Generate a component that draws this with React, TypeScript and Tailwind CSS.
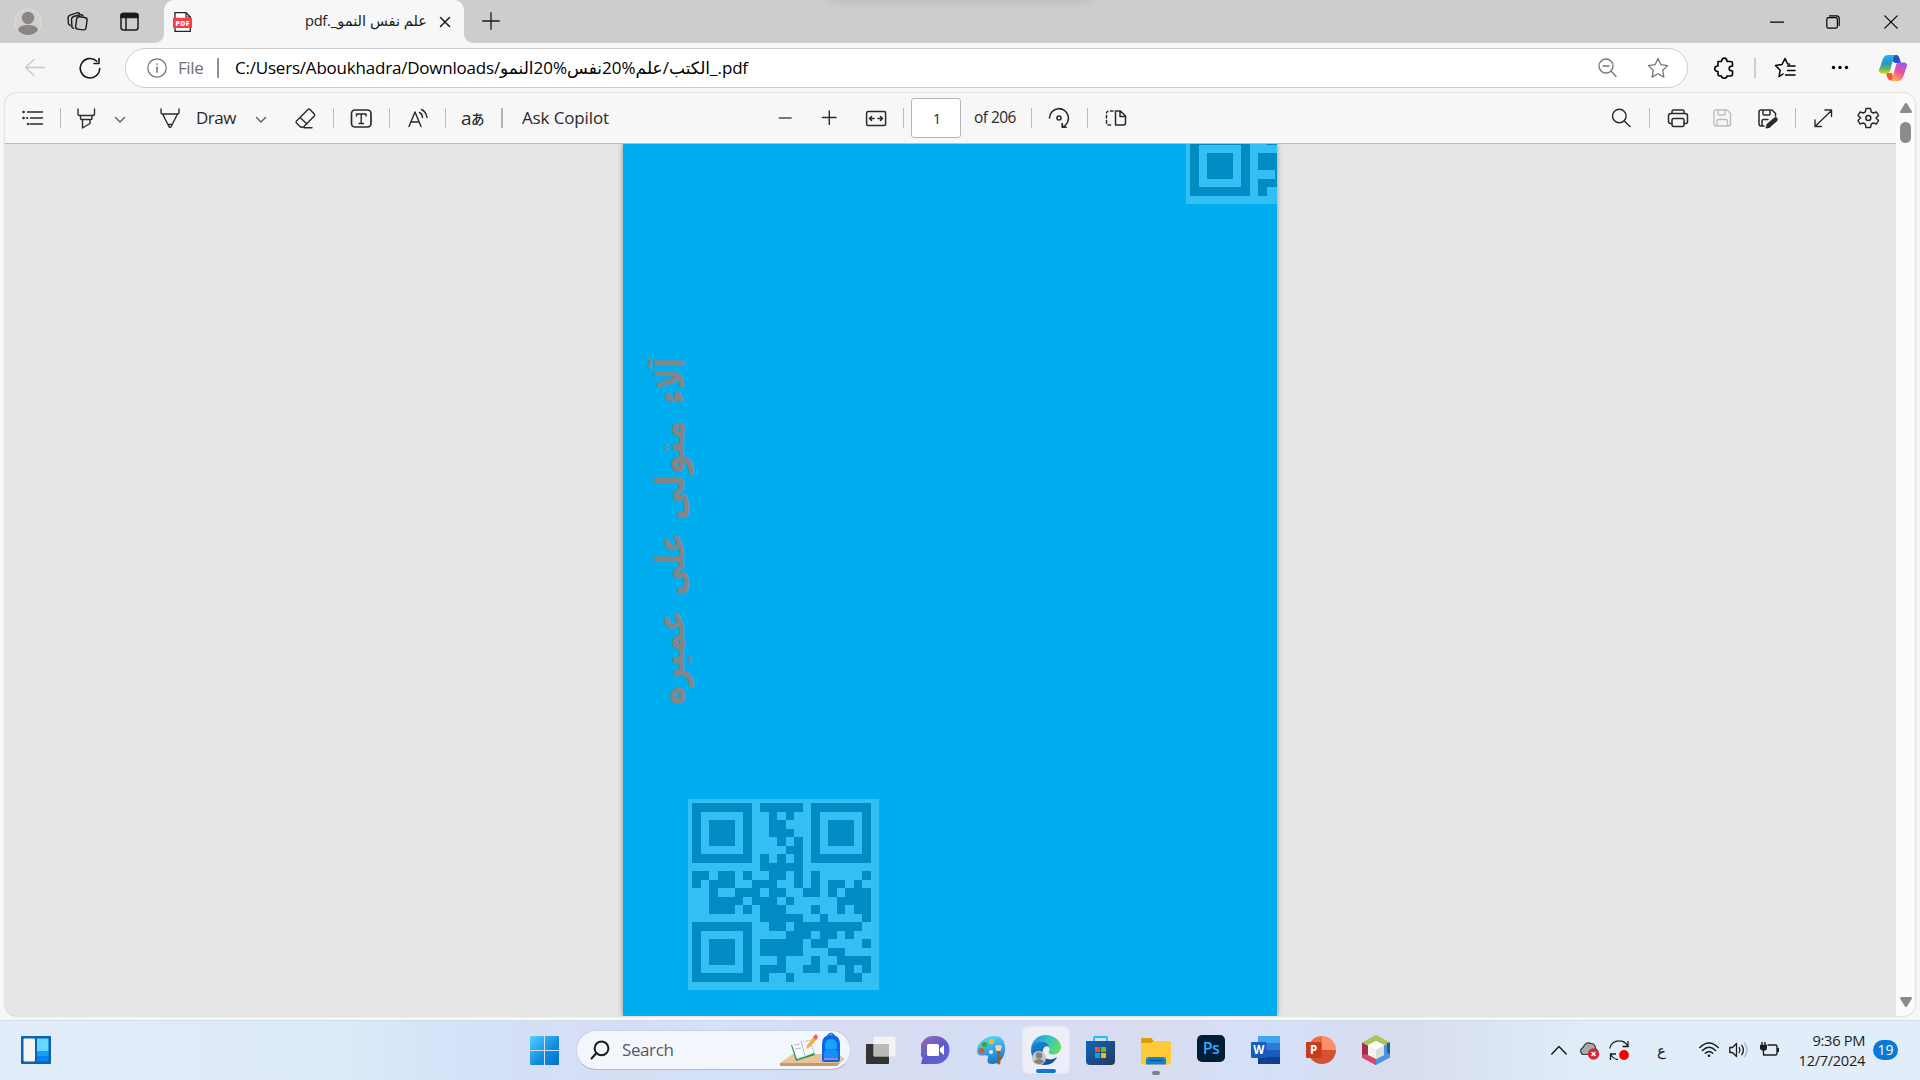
import React from "react";

type IconProps = { children: React.ReactNode; className?: string; box?: string; w?: number };

/** Line icon in the current text colour. */
const Icon = ({ children, className = "", box = "0 0 24 24", w = 1.4 }: IconProps) => (
  <svg viewBox={box} className={"block shrink-0 " + className} fill="none" stroke="currentColor" strokeWidth={w} strokeLinecap="round" strokeLinejoin="round">
    {children}
  </svg>
);

const Sep = ({ className = "" }: { className?: string }) => <div className={"h-5 w-px shrink-0 bg-[#bcbcbc] " + className} />;

const Chevron = ({ className = "" }: { className?: string }) => (
  <Icon box="0 0 12 12" w={1.2} className={"mt-1 size-3 text-[#555] " + className}><path d="M1.5 3.5 6 8l4.500-4.500" /></Icon>
);

const QR_ROWS = [
  "111111101111101111111",
  "100000100101001000001",
  "101110100110001011101",
  "101110100111001011101",
  "101110100010101011101",
  "100000100001101000001",
  "111111101010101111111",
  "000000001111100000000",
  "110110100110101000001",
  "101110011100101011010",
  "001001110110011010111",
  "001111011101000001111",
  "001110101110001001011",
  "000000001111100100001",
  "111111100110111111110",
  "100000100001110110100",
  "101110101111101100001",
  "101110101111100011000",
  "101110100010001001111",
  "100000101110011010101",
  "111111101001000000110",
];

const QrCode = ({ className }: { className: string }) => (
  <svg viewBox="0 0 191 191" className={"absolute size-[191px] " + className} shapeRendering="crispEdges">
    <rect width="191" height="191" fill="#33bff4" />
    <g transform="translate(4 4) scale(8.5)" fill="#008bc2">
      {QR_ROWS.map((row, y) =>
        (row.match(/1+|0+/g) ?? []).reduce<{ x: number; out: React.ReactNode[] }>(
          (acc, run) => {
            if (run[0] === "1") acc.out.push(<rect key={acc.x} x={acc.x} y={y} width={run.length} height="1" />);
            return { x: acc.x + run.length, out: acc.out };
          },
          { x: 0, out: [] },
        ).out,
      )}
    </g>
  </svg>
);

const TabStrip = () => (
  <header className="relative flex h-[43px] items-center overflow-hidden bg-[#cdcdcd] text-[#1b1b1b]">
    <div className="absolute -top-1 left-[830px] h-1 w-[260px] shadow-[0_0_10px_rgba(0,0,0,0.18)]" />
    <svg viewBox="0 0 28 28" className="ml-[14px] block size-7 shrink-0">
      <circle cx="14" cy="14" r="13.300" fill="#d2d0cd" stroke="#dedcd9" />
      <circle cx="14" cy="10" r="6.200" fill="#8a8683" />
      <path d="M4 22c1-4 5-5 10-5s9 1 10 5c-2 3.500-6 5-10 5s-8-1.500-10-5z" fill="#8a8683" />
    </svg>
    <Icon className="ml-[24px] size-6">
      <rect x="10" y="7" width="10.500" height="12.500" rx="2.500" transform="rotate(8 15 14)" />
      <path d="M7.500 18.300 6 17.500 5.500 9.500c0-1.500 1-2.500 2-3l7-1.700c1-.2 2 .2 2.500 1" />
      <path d="M4.300 15.500 2.500 14 2 8c0-1.500.8-2.500 2-2.800l7-2.300c1-.3 2 0 2.500.8" />
    </Icon>
    <Icon className="ml-[27px] size-6" w={1.500}>
      <rect x="4" y="3.500" width="17" height="16.500" rx="2.500" />
      <path d="M4 7.500V5.500a2 2 0 0 1 2-2h13a2 2 0 0 1 2 2v2z" fill="currentColor" /><path d="M9 8v12" />
    </Icon>
    <div className="relative ml-[23px] flex h-full w-[300px] shrink-0 items-center rounded-t-[10px] bg-[#f7f7f7]">
      <svg viewBox="0 0 10 10" className="absolute -left-[10px] bottom-0 size-[10px]"><path d="M10 0v10H0C6 10 10 6 10 0z" fill="#f7f7f7" /></svg>
      <svg viewBox="0 0 20 20" className="ml-[9px] block size-5 shrink-0">
        <path d="M2 .7h11l4.300 4.300v14.300H2z" fill="#fff" stroke="#222" strokeWidth="1.300" /><path d="M13 .7V5h4.300" fill="none" stroke="#222" strokeWidth="1.200" />
        <rect x="0" y="5.700" width="19" height="10.300" rx=".6" fill="#f93e42" />
        <text x="9.500" y="13.500" fill="#fff" fontSize="7" fontWeight="800" textAnchor="middle" textLength="14" fontFamily="Open Sans, sans-serif">PDF</text>
      </svg>
      <span dir="rtl" className="ml-[7px] w-[227px] whitespace-nowrap pb-[3px] text-right text-[14.600px] leading-6 tracking-[-0.280px]">علم نفس النمو_.pdf</span>
      <Icon box="0 0 12 12" className="ml-[12px] size-3" w={1.500}><path d="m1.500 1.500 9 9m0-9-9 9" /></Icon>
    </div>
    <svg viewBox="0 0 10 10" className="mt-auto block size-[10px] shrink-0"><path d="M0 0v10h10C4 10 0 6 0 0z" fill="#f7f7f7" /></svg>
    <Icon box="0 0 18 18" className="mb-0.5 ml-[8px] size-[18px]" w={1.300}><path d="M9 .7v16.600M.7 9h16.600" /></Icon>
    <Icon box="0 0 14 14" className="ml-auto mr-[42px] size-[14px] text-black" w={1.300}><path d="M.5 7.200h13" /></Icon>
    <Icon box="0 0 14 14" className="mr-[44px] size-[14px] text-black" w={1.200}><rect x=".8" y="2.600" width="10.600" height="10.600" rx="1.800" /><path d="M3.500.8h7a2.700 2.700 0 0 1 2.700 2.700v7" /></Icon>
    <Icon box="0 0 14 14" className="mr-[22px] size-[14px] text-black" w={1.200}><path d="m.8.8 12.400 12.400m0-12.400L.8 13.200" /></Icon>
  </header>
);

const STAR = "m12 2.500 2.900 6.200 6.700.9-4.900 4.700 1.200 6.800-5.900-3.300-5.900 3.300 1.200-6.800-4.900-4.700 6.700-.9z";

const AddressBar = () => (
  <div className="flex h-[50px] items-center bg-[#f7f7f7]">
    <Icon className="ml-[23px] size-6 text-[#c8c8c8]" w={1.300}><path d="M21.500 11.500h-19M11 3.500l-8.500 8 8.500 8" /></Icon>
    <Icon className="ml-[31px] size-6 text-[#1b1b1b]" w={1.600}><path d="M21.700 12.500A9.700 9.700 0 1 1 18.800 5.300M21 2.500v5h-5" /></Icon>
    <div className="ml-[23px] flex h-10 w-[1563px] shrink-0 items-center rounded-full border border-[#cecece] bg-white">
      <Icon box="0 0 20 20" className="ml-[21px] size-5 text-[#707070]" w={1.200}><circle cx="10" cy="10" r="9.200" /><path d="M10 9v5.200M10 6v.3" strokeWidth="1.500" /></Icon>
      <span className="ml-[11px] w-[26px] whitespace-nowrap text-[17px] tracking-[-0.400px] text-[#707070]">File</span>
      <div className="ml-[13px] h-5 w-0.5 bg-[#929292]" />
      <span className="ml-[16px] whitespace-nowrap text-[17px] tracking-[-0.210px] text-black">
        C:/Users/Aboukhadra/Downloads/<span className="tracking-[-0.400px]">الكتب/علم%20نفس%20النمو</span>_.pdf
      </span>
      <Icon className="ml-auto mr-[27px] size-6 text-[#767676]" w={1.300}><circle cx="11" cy="10" r="7" /><path d="m16 15 5 5.500M8 10h6" /></Icon>
      <Icon className="mr-[17px] size-6 text-[#767676]" w={1.300}><path d={STAR} /></Icon>
    </div>
    <Icon className="ml-[24px] size-6 text-black" w={1.600}>
      <path d="M6 5.500h3.500c0-4.500 5.500-4.500 5.500 0h3.500q2 0 2 2V10c-4.500 0-4.500 5 0 5v3q0 2-2 2H15c0 3-5.500 3-5.500 0H8q-2 0-2-2v-2.500c-4.500 0-4.500-5.500 0-5.500z" />
    </Icon>
    <div className="ml-[18px] h-5 w-0.5 bg-[#cfcfcf]" />
    <Icon className="ml-[17px] size-6 text-black" w={1.500}><path d="M10 18 6 20.700l1.200-6.500L2.500 9.500l6.500-1L12 2.500l2.500 5.300 2 .4M14.500 10H22m-7.500 4.500H22M12.500 19H22" /></Icon>
    <Icon className="ml-[31px] size-6 text-black"><g fill="currentColor" stroke="none"><circle cx="5.500" cy="11.500" r="1.700" /><circle cx="12" cy="11.500" r="1.700" /><circle cx="18.500" cy="11.500" r="1.700" /></g></Icon>
    <svg viewBox="0 0 28 26" className="ml-[27px] block h-[26px] w-7 shrink-0">
      <defs>
        <linearGradient id="cpA" x1="0" y1="0" x2="0" y2="1"><stop stopColor="#20b5f0" /><stop offset=".45" stopColor="#2f91c8" /><stop offset=".75" stopColor="#5dba58" /><stop offset="1" stopColor="#f3cd15" /></linearGradient>
        <linearGradient id="cpB" x1=".7" y1="0" x2=".3" y2="1"><stop stopColor="#9b58f5" /><stop offset=".5" stopColor="#eb519a" /><stop offset="1" stopColor="#ffb04f" /></linearGradient>
      </defs>
      <path d="M14 0h3c2.500 0 3 1.500 4 5l1 3h-6l-5-4z" fill="#2052cb" />
      <path d="M7 18h6l2 7.500h-3c-3 0-4-3-5-7.500z" fill="#f05a35" />
      <path d="M17 0H9C5.500 0 4 3 2.500 8 1 13 0 14 0 16c0 2 2 2.500 4 2.500h4c2 0 2.700-1.500 3.200-3.500L14 5c.6-2.500 1-5 3-5z" fill="url(#cpA)" />
      <path d="M11 26h8c3.500 0 5-3 6.500-8s2.500-6 2.500-8c0-2-2-2.500-4-2.500h-4c-2 0-2.700 1.500-3.200 3.500L14 21c-.6 2.500-1 5-3 5z" fill="url(#cpB)" />
    </svg>
  </div>
);

const Toolbar = () => (
  <div className="flex h-[51px] shrink-0 items-center border-b border-[#bcbcbc] bg-[#f7f7f7] text-[#2a2a2a]">
    <Icon className="ml-[15px] size-6" w={1.500}><path d="M7.500 6h15M10.500 12h12M10.500 18h12" /><g fill="currentColor" strokeWidth=".6"><circle cx="3.500" cy="6" r="1" /><circle cx="3.500" cy="12" r="1" /><circle cx="8" cy="18" r="1" /><circle cx="7" cy="12" r=".8" /></g></Icon>
    <Sep className="ml-[16px]" />
    <Icon className="ml-[13px] size-6"><path d="M4 3v5q0 1.500 1.500 1.500h13.500q1.500 0 1.500-1.500V3M6.500 9.500v3q0 1 1 1h9.500q1 0 1-1v-3M8.500 13.500V22l7.500-4.500v-4" /></Icon>
    <Chevron className="ml-[16px]" />
    <Icon className="ml-[32px] size-6"><path d="M3 3v3.500q0 1.500 1.500 1.500h15q1.500 0 1.500-1.500V3M4.500 8l6.500 12.500q1.200 1.800 2.200 0L19.500 8M10 18.500h4" /></Icon>
    <span className="ml-[14px] w-[41px] whitespace-nowrap text-[17px] tracking-[-0.500px]">Draw</span>
    <Chevron className="ml-[18px]" />
    <Icon className="ml-[26px] size-6"><path d="m3.500 15 11.500-11.500q1-1 2 0L21.300 8q1 1 0 2L12 19.500Q10 22 7.500 21l-4-4q-1-1 0-2zM7 11.500l7 6.500M11 21.700h8" /></Icon>
    <Sep className="ml-[16px]" />
    <Icon className="ml-[15px] size-6"><rect x="2.500" y="4" width="19.500" height="17" rx="3.500" strokeWidth="1.700" /><path d="M7.500 10V8h9.500v2M12.200 8v9.500M10 17.500h4.500" /></Icon>
    <Sep className="ml-[16px]" />
    <Icon className="ml-[16px] size-6"><path d="M3 20.500 9 6l6 14.500M5 16h8M13.500 6.500q3 1.500 3 5M15.500 3.500q4.500 2 5.500 8" /></Icon>
    <Sep className="ml-[15px]" />
    <span className="ml-[15px] flex w-6 items-center text-[19px] leading-6 tracking-[-0.500px]">a<span className="font-['Noto_Sans_CJK_JP',sans-serif] text-[13.500px] font-medium">あ</span></span>
    <div className="ml-[16px] h-5 w-0.5 shrink-0 bg-[#b4b4b4]" />
    <span className="ml-[19px] w-[90px] whitespace-nowrap text-[17px] tracking-[-0.130px]">Ask Copilot</span>
    <Icon className="ml-[161px] size-6 text-[#777]" w={1.800}><path d="M6.500 12H18" /></Icon>
    <Icon className="ml-[20px] size-6"><path d="M5.500 11.500h13.500M12.300 5v13.500" /></Icon>
    <Icon className="ml-[23px] size-6" w={1.500}><rect x="2.600" y="5.500" width="19" height="14" rx="1.500" /><path d="M5.500 12.500h4.500M7.500 10.500l-2 2 2 2M14 12.500h4.500m-2-2 2 2-2 2" /></Icon>
    <Sep className="ml-[15px]" />
    <div className="ml-[7px] flex h-10 w-[50px] shrink-0 items-center justify-center rounded-[3px] border border-[#b5b5b5] bg-white pl-0.5 text-[15px]">1</div>
    <span className="ml-[13px] w-11 whitespace-nowrap text-[15.500px] tracking-[-0.550px]">of 206</span>
    <Sep className="ml-[13px]" />
    <Icon className="ml-[15px] size-6" w={1.600}><path d="M2.500 12a9.500 9.500 0 1 1 13 9M15.200 17.500V21.300h4" /><circle cx="12" cy="12" r="2" /></Icon>
    <Sep className="ml-[16px]" />
    <Icon className="ml-[16px] size-6" w={1.500}><path d="M11.500 5h5l5 5v7q0 2-2 2h-8zM16 5.500v5h5" /><path d="M9 5H5Q2.500 5 2.500 7.500v9Q2.500 19 5 19h4" strokeDasharray="2.500 2.500" /></Icon>
    <Icon className="ml-[481px] size-6" w={1.400}><circle cx="10.300" cy="10" r="6.800" /><path d="m15.300 15 5.700 5.500" /></Icon>
    <Sep className="ml-[16px]" />
    <Icon className="ml-[16px] size-6" w={1.500}><path d="M6 7V5.500Q6 4 7.500 4h9Q18 4 18 5.500V7M6 17.500H4.500q-2 0-2-2V10q0-2.500 2.500-2.500h14q2.500 0 2.500 2.500v5.500q0 2-2 2H18" /><rect x="6" y="12.500" width="12" height="8" rx="1.500" /></Icon>
    <Icon className="ml-[20px] size-6 text-[#bdbdbd]"><path d="M4 6q0-2 2-2h11l3.500 3.500V18q0 2-2 2H6q-2 0-2-2zM8 4v4q0 1 1 1h5q1 0 1-1V4M7 20v-5q0-1.500 1.500-1.500h7.500q1.500 0 1.500 1.500v5" /></Icon>
    <Icon className="ml-[21px] size-6" w={1.500}><path d="M9 20H6q-2 0-2-2V6q0-2 2-2h11l3.500 3.500V10M8 4v4q0 1 1 1h5q1 0 1-1V4M7 20v-5q0-1.500 1.500-1.500H13" /><path d="m13.500 19.500 7-6" strokeWidth="4.500" /><path d="m11.500 21.500 3-1" strokeWidth="2" /></Icon>
    <Sep className="ml-[16px]" />
    <Icon className="ml-[15px] size-6"><path d="m4 20.500 16.500-16M14 4h6.500v6.500M4 14v6.500h6.500" /></Icon>
    <Icon className="mb-px ml-[21px] size-6" w={1.500}>
      <path d="m10 2.500-.7 3.300-2 1.200L4 6 2 9.500 4.500 12 2 14.500 4 18l3.300-1 2 1.200.7 3.300h4.500l.7-3.300 2-1.200 3.300 1 2-3.500L20 12l2.500-2.500-2-3.500-3.300 1-2-1.200-.7-3.300z" /><circle cx="12.300" cy="12" r="2.500" />
    </Icon>
  </div>
);

const Viewer = () => (
  <main className="h-[927px] bg-[#f7f7f7] px-[5px]">
    <div className="flex h-[923px] overflow-hidden rounded-[12px] bg-[#e6e6e6] shadow-[0_0_2px_rgba(0,0,0,0.3)]">
      <div className="flex w-[1891px] shrink-0 flex-col">
        <Toolbar />
        <div className="flex grow overflow-hidden pl-[618px]">
          <div className="relative w-[654px] bg-[#00aef0] shadow-[0_0_5px_rgba(0,0,0,0.4)]">
            <div className="absolute inset-0 overflow-hidden">
              <QrCode className="-top-[131px] left-[563px]" />
              <QrCode className="left-[65px] top-[655px]" />
              <div dir="rtl" className="absolute left-[23px] top-[559px] flex h-[52px] w-[345px] origin-top-left -rotate-90 items-center justify-between whitespace-nowrap font-['DejaVu_Sans',sans-serif] text-[34px] font-bold leading-[52px] text-[#858585]">
                <span className="w-[46px] origin-[right_70%] scale-x-[0.850] scale-y-[1.150]">آلاء</span>
                <span className="w-[96px] origin-[right_70%] scale-x-[0.970] scale-y-[1.150]">متولى</span>
                <span className="w-[61px] origin-[right_70%] scale-x-[0.870] scale-y-[1.150]">على</span>
                <span className="w-[93px] origin-[right_70%] scale-x-[0.940] scale-y-[1.150]">عميره</span>
              </div>
            </div>
          </div>
        </div>
      </div>
      <div className="flex grow flex-col items-center bg-[#fbfbfb]">
        <svg viewBox="0 0 12 10" className="mt-[10px] block h-[10px] w-3"><path d="M6 0q.7 0 1.200.8L12 8.500q0 1.500-1 1.500H1q-1 0-1-1.500L4.800.8Q5.300 0 6 0z" fill="#8b8b8b" /></svg>
        <div className="mt-[9px] h-[21px] w-[11px] rounded-full bg-[#8b8b8b]" />
        <svg viewBox="0 0 12 10" className="mb-[9px] mt-auto block h-[10px] w-3"><path d="M6 10q.7 0 1.200-.8L12 1.500Q12 0 11 0H1Q0 0 0 1.500l4.800 7.700q.5.8 1.200.8z" fill="#8b8b8b" /></svg>
      </div>
    </div>
  </main>
);

const Taskbar = () => (
  <footer className="flex h-[60px] items-center border-t border-[#d0dcea] bg-[linear-gradient(90deg,#e1edf8_0%,#deebf8_17%,#d3e0f7_25%,#d6def3_33%,#d2e2f8_37%,#d7dcf1_45%,#d5def5_52%,#d8dcef_60%,#d4e0f8_65%,#d8dcee_73%,#dbe5f4_78%,#e1edf8_83%,#e1edf8_100%)] pb-px text-[#1c1c1c]">
    <svg viewBox="0 0 30 28" className="ml-[21px] block h-7 w-[30px] shrink-0">
      <rect width="30" height="28" rx="1" fill="#0b62b5" /><rect x="2.500" y="2.500" width="11.500" height="23" rx="1" fill="#f5f5f5" />
      <rect x="16" y="2.500" width="11.500" height="12.500" fill="#66d9ff" /><rect x="16" y="15" width="11.500" height="5" fill="#1a9df5" /><rect x="16" y="20" width="11.500" height="5.500" fill="#0583ea" />
    </svg>
    <svg viewBox="0 0 29 29" className="ml-[479px] block size-[29px] shrink-0">
      <defs><linearGradient id="win" x1="0" y1="0" x2="1" y2="1"><stop stopColor="#4fd0ff" /><stop offset=".6" stopColor="#118ade" /><stop offset="1" stopColor="#0070cc" /></linearGradient></defs>
      <path d="M1 0h13v14H0V1q0-1 1-1zM15 0h13q1 0 1 1v13H15zM0 15h14v14H1q-1 0-1-1zM15 15h14v13q0 1-1 1H15z" fill="url(#win)" />
    </svg>
    <div className="ml-[17px] flex h-10 w-[275px] shrink-0 items-center overflow-hidden rounded-full border border-[#c9d3e6] border-b-[#aeb9cf] bg-[#f3f6fd]">
      <svg viewBox="0 0 20 20" className="ml-[13px] block size-5 shrink-0" fill="none" stroke="#1c1c1c" strokeWidth="2" strokeLinecap="round"><circle cx="11.500" cy="8.300" r="6.900" /><path d="m6.500 13-5 5.500" /></svg>
      <span className="ml-[12px] text-[17px] tracking-[-0.400px] text-[#5a5a5a]">Search</span>
      <svg viewBox="0 0 66 36" className="ml-auto mr-[4px] block h-9 w-[66px] shrink-0">
        <path d="M0 31 13 22h45l7 5-8 6H0z" fill="#e8c49a" /><path d="M0 31h60l-3 3H0z" fill="#c69b6c" />
        <path d="m11 13 19-5 5 15-19 6z" fill="#2f9a56" /><path d="m11 10 9-1 3 1 6-4 5 15-8 3-9 3z" fill="#f8f8ff" /><path d="m21 9 4 15M14 13l6-1m-5 5 6-1m4-6 4-2m-3 6 4-2" stroke="#b8b5d6" fill="none" />
        <path d="m26 17 2-5 6-8 3 3-7 8z" fill="#f9b034" /><path d="m33 5 3-3 2 3-2 3z" fill="#ef5b66" />
        <path d="M47 5q4-7 8 0" fill="none" stroke="#1763d8" strokeWidth="1.500" /><path d="M42 28V12q0-9 9-9t9 9v16q0 2-2 2H44q-2 0-2-2z" fill="#0c66e8" /><path d="M45 14q0-7 6-7t6 7v3H45z" fill="#15a3fb" /><path d="M44 26v-5q0-4 7-4t7 4v5z" fill="#168ef5" /><path d="M44 27h14" stroke="#b797ff" strokeWidth="1.500" />
      </svg>
    </div>
    <svg viewBox="0 0 30 28" className="ml-[15px] block h-7 w-[30px] shrink-0"><rect y="8" width="23" height="20" rx="1" fill="#333432" /><rect x="7.500" y=".5" width="22" height="20" rx="1" fill="#f3f3f1" /><path d="M8 8h15v12H8z" fill="#b9bab9" /></svg>
    <svg viewBox="0 0 29 29" className="ml-[25px] block size-[29px] shrink-0">
      <defs><linearGradient id="chat" x1="0" y1="0" x2=".8" y2="1"><stop stopColor="#9a6bb5" /><stop offset=".6" stopColor="#5b5bcb" /><stop offset="1" stopColor="#6063d6" /></linearGradient></defs>
      <path d="M14.500 0a14 14 0 0 1 0 28H0l1.500-6A14 14 0 0 1 14.500 0z" fill="url(#chat)" /><rect x="6" y="8" width="12" height="12" rx="1.500" fill="#fff" /><path d="m19 12.500 4-3.500v10l-4-3.500z" fill="#fff" />
    </svg>
    <svg viewBox="0 0 28 29" className="ml-[27px] block h-[29px] w-7 shrink-0">
      <defs><linearGradient id="paint" x1=".3" y1="0" x2=".6" y2="1"><stop stopColor="#5fd8f2" /><stop offset="1" stopColor="#1573d0" /></linearGradient></defs>
      <path d="M17 0C27 0 28 8 28 13c0 8-5 15-13 15-5 0-5-3-4-6 .8-2.500-1-3-4-2.500C3 20 0 19 0 15 0 7 8 0 17 0z" fill="url(#paint)" />
      <circle cx="14.500" cy="5.500" r="2.600" fill="#ffbd0b" /><circle cx="7.500" cy="8.500" r="2.600" fill="#3daa27" /><circle cx="4.500" cy="14.500" r="2.600" fill="#d9552e" /><circle cx="14" cy="16" r="2" fill="#d2edff" />
      <path d="M18 10q4-2 7 0l-1.500 5h-4z" fill="#ecd5b2" /><path d="M20 15h3l.5 12q-2 3-3.500 0z" fill="#a85b12" />
    </svg>
    <div className="relative ml-[17px] flex size-12 shrink-0 items-start justify-center rounded-md border border-[#e3e6f2] bg-[#eceef8] pt-[8px]">
      <svg viewBox="0 0 30 30" className="block size-[30px]">
        <defs>
          <linearGradient id="edA" x1="0" y1=".3" x2="1" y2=".6"><stop stopColor="#2490d5" /><stop offset=".5" stopColor="#35c1cf" /><stop offset="1" stopColor="#68df58" /></linearGradient>
          <linearGradient id="edB" x1="0" y1="0" x2=".8" y2="1"><stop stopColor="#168cdc" /><stop offset="1" stopColor="#164a8f" /></linearGradient>
        </defs>
        <path d="M0 15C0 6 7 0 15 0s15 6 15 12c0 5-4 7.500-8 7.500-3 0-5-1-4-3 1.500-3 0-5-3-5C9 11 2 9 0 15z" fill="url(#edA)" />
        <path d="M0 15C1 9 6 7 11 7c4 0 6 2 7 4-5-1-7 4-6 8 1.500 6 9 7 14 3-2 5-7 8-12 8C6 30 0 23 0 15z" fill="url(#edB)" />
        <circle cx="8" cy="23" r="7" fill="#c8c6c4" /><circle cx="8" cy="20.500" r="3.200" fill="#85817e" /><path d="M3 27q1-3 5-3t5 3q-5 4-10 0z" fill="#85817e" />
      </svg>
      <div className="absolute bottom-0 left-[13px] h-1 w-5 rounded-full bg-[#0f78d4]" />
    </div>
    <svg viewBox="0 0 29 29" className="ml-[16px] block size-[29px] shrink-0">
      <defs><linearGradient id="store" x1="0" y1="0" x2="1" y2="1"><stop stopColor="#0669bd" /><stop offset="1" stopColor="#29365c" /></linearGradient></defs>
      <path d="M8 6V2q0-1 1-1h11q1 0 1 1v4" fill="none" stroke="#20bdf6" strokeWidth="1.800" /><path d="M0 5h29v20q0 4-4 4H4q-4 0-4-4z" fill="url(#store)" />
      <path d="M9 11h5v5H9z" fill="#f25022" /><path d="M15 11h5v5h-5z" fill="#7fba00" /><path d="M9 17h5v5H9z" fill="#00a4ef" /><path d="M15 17h5v5h-5z" fill="#ffb900" />
    </svg>
    <div className="ml-[26px] flex h-[59px] w-[30px] shrink-0 flex-col items-center pt-[17px]">
      <svg viewBox="0 0 30 27" className="block h-[27px] w-[30px]">
        <path d="M0 1q0-1 1-1h9l3 3h-1v5H0z" fill="#df9c04" /><path d="M0 5h10l3-2h16q1 0 1 1v21q0 1.500-1.500 1.500h-27Q0 26.500 0 25z" fill="#ffcb3b" />
        <path d="M5 26.500V22q0-3 3-3h14q3 0 3 3v4.500z" fill="#1380d5" /><path d="M9 22.500h12" stroke="#0b529b" strokeWidth="1.300" />
      </svg>
      <div className="mt-[6px] h-1 w-2 rounded-full bg-[#7d8089]" />
    </div>
    <div className="mb-[3px] ml-[26px] flex h-[27px] w-7 shrink-0 items-center justify-center rounded-[5px] bg-[#021e36] pb-0.5 text-[16px] font-semibold tracking-[-0.500px] text-[#31a8ff]">Ps</div>
    <svg viewBox="0 0 30 28" className="ml-[26px] block h-7 w-[30px] shrink-0">
      <path d="M7 0h22v7H7z" fill="#41a5ee" /><path d="M7 7h22v7H7z" fill="#2b7cd3" /><path d="M7 14h22v7H7z" fill="#185abd" /><path d="M7 21h22v7H7z" fill="#103f91" /><rect y="6" width="15.500" height="16" rx="1" fill="#195abe" />
      <text x="7.700" y="18" fill="#fff" fontSize="11.500" fontWeight="700" textAnchor="middle" fontFamily="Open Sans, sans-serif">W</text>
    </svg>
    <svg viewBox="0 0 30 28" className="ml-[25px] block h-7 w-[30px] shrink-0">
      <path d="M16 0a14 14 0 0 0-14 14h14z" fill="#ed6c47" /><path d="M16 0a14 14 0 0 1 14 14H16z" fill="#ff8f6b" /><path d="M2 14a14 14 0 0 0 28 0z" fill="#d35230" /><rect y="6" width="15.500" height="16" rx="1" fill="#c43e1c" />
      <text x="7.700" y="18" fill="#fff" fontSize="11.500" fontWeight="700" textAnchor="middle" fontFamily="Open Sans, sans-serif">P</text>
    </svg>
    <svg viewBox="0 0 28 30" className="ml-[26px] block h-[30px] w-7 shrink-0">
      <path d="M14 0 28 7.500 14 15 0 7.500z" fill="#a9c657" /><path d="M0 7.500v15L14 30V15z" fill="#a82c52" /><path d="M0 20v2.500L14 30V18z" fill="#d9486b" /><path d="M28 7.500v15L14 30V15z" fill="#4a93df" /><path d="m25 8 3-.5v12l-3-2z" fill="#255b97" />
      <path d="m14 6 8 4v10l-8 4-8-4V10z" fill="#eef5ec" /><path d="m14 15 8-5v10l-8 4z" fill="#d8dedc" /><path d="m14 6 8 4-8 5-8-5z" fill="#fff" />
    </svg>
    <Icon box="0 0 16 10" className="ml-auto h-[10px] w-4" w={1.500}><path d="m.8 9 7.200-7.500L15.200 9" /></Icon>
    <svg viewBox="0 0 21 18" className="ml-[12px] mt-0.5 block h-[18px] w-[21px] shrink-0">
      <path d="M3.500 12.500Q-.5 8 4 5.500 7-1 12 1.500q4 0 4.500 5Q19 8 18 12z" fill="#aaa" stroke="#333" strokeWidth="1.200" /><circle cx="14.500" cy="12" r="5.700" fill="#d92535" /><path d="m12.500 10 4 4m0-4-4 4" stroke="#fff" strokeWidth="1.500" />
    </svg>
    <svg viewBox="0 0 20 20" className="ml-[9px] block size-5 shrink-0" fill="none" stroke="#1c1c1c" strokeWidth="1.300"><path d="M.8 8.500C1.500 3.500 6 .7 10 .8c4 0 7 2 8.500 5M19 1v5.500h-5.500M1.500 20v-6H7M2 15q3 4.500 7 4.500" /><circle cx="15" cy="15" r="4.900" fill="#f00" stroke="none" /></svg>
    <span className="ml-[28px] w-[10px] text-[15px]">ع</span>
    <Icon box="0 0 20 16" className="ml-[32px] h-4 w-5" w={1.500}><path d="M.8 5.500q9.200-9 18.400 0M3.500 8.500q6.500-6.500 13 0M6.300 11.300q3.700-3.500 7.400 0" /><circle cx="10" cy="13.700" r="1.300" fill="currentColor" stroke="none" /></Icon>
    <Icon box="0 0 20 16" className="ml-[10px] h-4 w-5" w={1.300}><path d="M.8 5.500h2.700L7.500 1.500v13l-4-4H.8zM10.200 5.500q1.600 2.500 0 5M12.800 3.300q3.200 4.700 0 9.400" /><path d="M15.500 1.300q5 6.700 0 13.400" stroke="#aeb6bf" /></Icon>
    <Icon box="0 0 20 16" className="ml-[11px] h-4 w-5" w={1.400}><path d="M8 3h7.500q1.500 0 1.500 1.500v7q0 1.500-1.500 1.500H4M3.500 8v5M18.300 6.500v3" /><path d="M.7 3.500h5.600V6q0 2-2.800 2T.7 6zM2 .5V3M5 .5V3" fill="currentColor" /></Icon>
    <div className="ml-[17px] w-[68px] whitespace-nowrap text-right text-[14.700px] leading-5 tracking-[-0.350px]"><div>9:36 PM</div><div className="-ml-1">12/7/2024</div></div>
    <div className="ml-[8px] mr-[22px] flex h-5 w-[25px] shrink-0 items-center justify-center rounded-full bg-[#0779d6] text-[14px] leading-5 text-white">19</div>
  </footer>
);

export default function App() {
  return (
    <div className="flex h-[1080px] w-[1920px] flex-col overflow-hidden bg-[#f7f7f7] font-['Open_Sans','DejaVu_Sans',sans-serif]">
      <TabStrip />
      <AddressBar />
      <Viewer />
      <Taskbar />
    </div>
  );
}
